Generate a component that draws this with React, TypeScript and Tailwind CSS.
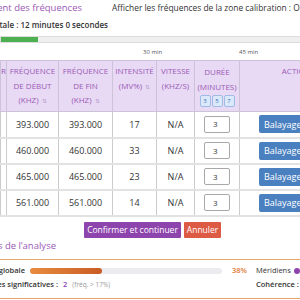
import React from 'react';

const ROWS = [
  { start: '393.000', end: '393.000', intensity: '17' },
  { start: '460.000', end: '460.000', intensity: '33' },
  { start: '465.000', end: '465.000', intensity: '23' },
  { start: '561.000', end: '561.000', intensity: '14' },
];

function SortIcon() {
  return <span className="ml-[3px] text-[6px] text-[#b79ccc]">⇅</span>;
}

// text that is cut on its left by the viewport: right-aligned and clipped
function Clipped({ width, className, children }: { width: string; className?: string; children: React.ReactNode }) {
  return (
    <div className={`flex shrink-0 justify-end overflow-hidden whitespace-nowrap ${width} ${className ?? ''}`}>
      <span>{children}</span>
    </div>
  );
}

export default function App() {
  return (
    <div className="h-[300px] w-[300px] overflow-hidden bg-white font-['Open_Sans',sans-serif] text-[#333]">
      {/* Title row */}
      <div className="flex h-[16px] items-center">
        <Clipped width="w-[82px]" className="text-[9.5px] text-[#9b59b6]">
          Ajustement des fréquences
        </Clipped>
        <span className="ml-[30px] whitespace-nowrap text-[8.4px] text-[#333]">
          Afficher les fréquences de la zone calibration : Oui
        </span>
      </div>

      {/* Total duration */}
      <div className="mt-[2px] flex h-[14px] items-center">
        <Clipped width="w-[108px]" className="text-[8px] font-semibold">
          Durée totale : 12 minutes 0 secondes
        </Clipped>
      </div>

      {/* Timeline */}
      <div className="mt-[4px] h-[7px] w-[340px] border border-[#dcdcdc] bg-[#efefef]">
        <div className="h-full w-[37px] bg-[#4caf50]" />
      </div>
      <div className="relative h-[17px] text-[6px] text-[#555]">
        <span className="absolute left-[143px] top-[5px]">30 min</span>
        <span className="absolute left-[239px] top-[5px]">45 min</span>
      </div>

      {/* Frequency table */}
      <table className="w-[357px] table-fixed border-collapse">
        <colgroup>
          <col className="w-[6px]" />
          <col className="w-[52px]" />
          <col className="w-[54px]" />
          <col className="w-[44px]" />
          <col className="w-[38px]" />
          <col className="w-[45px]" />
          <col className="w-[118px]" />
        </colgroup>
        <thead>
          <tr className="h-[51px] bg-[#e8d9f4] text-[8px] uppercase leading-[14.5px] text-[#9b59b6]">
            <th className="overflow-hidden border border-[#cdc3d8] p-0 pt-[3px] align-top font-normal">
              <Clipped width="w-[5px]">R</Clipped>
            </th>
            <th className="border border-[#cdc3d8] p-0 pt-[3px] align-top font-normal">
              Fréquence<br />de début<br />(kHz)<SortIcon />
            </th>
            <th className="border border-[#cdc3d8] p-0 pt-[3px] align-top font-normal">
              Fréquence<br />de fin<br />(kHz)<SortIcon />
            </th>
            <th className="border border-[#cdc3d8] p-0 pt-[3px] align-top font-normal">
              Intensité<br />(mV%)<SortIcon />
            </th>
            <th className="border border-[#cdc3d8] p-0 pt-[3px] align-top font-normal">
              Vitesse<br />(kHz/s)
            </th>
            <th className="border border-[#cdc3d8] p-0 pt-[4px] align-top font-normal">
              Durée<br />(minutes)
              <div className="mt-[1px] flex justify-center gap-[1px]">
                {['3', '5', '7'].map((m) => (
                  <span
                    key={m}
                    className="flex h-[12px] w-[11px] items-center justify-center rounded-[2px] border border-[#9fbbe6] bg-[#dce9fb] text-[6px] leading-none text-[#3b6fb8]"
                  >
                    {m}
                  </span>
                ))}
              </div>
            </th>
            <th className="border border-[#cdc3d8] p-0 pt-[3px] align-top font-normal">Actions</th>
          </tr>
        </thead>
        <tbody className="text-[9px] text-[#333]">
          {ROWS.map((r) => (
            <tr key={r.start} className="h-[26px] border-b-2 border-[#e2e2e2]">
              <td className="border-x border-[#cccccc] p-0" />
              <td className="border-x border-[#cccccc] p-0 text-center">{r.start}</td>
              <td className="border-x border-[#cccccc] p-0 text-center">{r.end}</td>
              <td className="border-x border-[#cccccc] p-0 text-center">{r.intensity}</td>
              <td className="border-x border-[#cccccc] p-0 text-center">N/A</td>
              <td className="border-x border-[#cccccc] p-0">
                <div className="flex justify-center">
                  <div className="flex h-[17px] w-[26px] items-center rounded-[2px] border border-[#a8a8a8] pl-[8px] text-[8px]">
                    3
                  </div>
                </div>
              </td>
              <td className="border-x border-[#cccccc] p-0 pl-[19px]">
                <button className="h-[18px] w-[80px] rounded-[2px] bg-[#4a7fc0] px-[5px] text-left text-[9px] text-white">
                  Balayage
                </button>
              </td>
            </tr>
          ))}
        </tbody>
      </table>

      {/* Actions */}
      <div className="mt-[5px] flex gap-[3px] pl-[84px]">
        <button className="h-[16px] w-[97px] whitespace-nowrap rounded-[1px] bg-[#8e44ad] text-[8.5px] leading-[16px] text-white">
          Confirmer et continuer
        </button>
        <button className="h-[16px] w-[37px] whitespace-nowrap rounded-[1px] bg-[#dd5a45] text-[8.5px] leading-[16px] text-white">
          Annuler
        </button>
      </div>

      {/* Analysis results */}
      <div className="mt-[1px] flex h-[16px] items-center">
        <Clipped width="w-[56px]" className="text-[9.5px] text-[#9b59b6]">
          Résultats de l’analyse
        </Clipped>
      </div>
      <div className="mt-[4px] w-[340px] border-y border-[#e4a56e] pb-[7px] pt-[5px]">
        <div className="flex h-[12px] items-center text-[7.5px]">
          <Clipped width="w-[25px]" className="font-semibold">
            Cohérence globale
          </Clipped>
          <div className="ml-[5px] h-[6px] w-[192px] rounded-full bg-[#ebebf0]">
            <div className="h-full w-[72px] rounded-full bg-gradient-to-r from-[#e98c3f] to-[#c85c24]" />
          </div>
          <span className="ml-[10px] w-[24px] font-semibold text-[#e07b39]">38%</span>
          <span>Méridiens</span>
          <span className="ml-[3px] h-[6px] w-[6px] rounded-full bg-[#8e44ad]" />
        </div>
        <div className="mt-[2px] flex h-[12px] items-center text-[7.5px]">
          <div className="flex w-[256px] items-center">
            <Clipped width="w-[58px]" className="font-semibold">
              Fréquences significatives :
            </Clipped>
            <span className="ml-[5px] font-semibold text-[#8e44ad]">2</span>
            <span className="ml-[5px] text-[6.5px] text-[#999]">(fréq. &gt; 17%)</span>
          </div>
          <span className="font-semibold">Cohérence :</span>
        </div>
      </div>
    </div>
  );
}
